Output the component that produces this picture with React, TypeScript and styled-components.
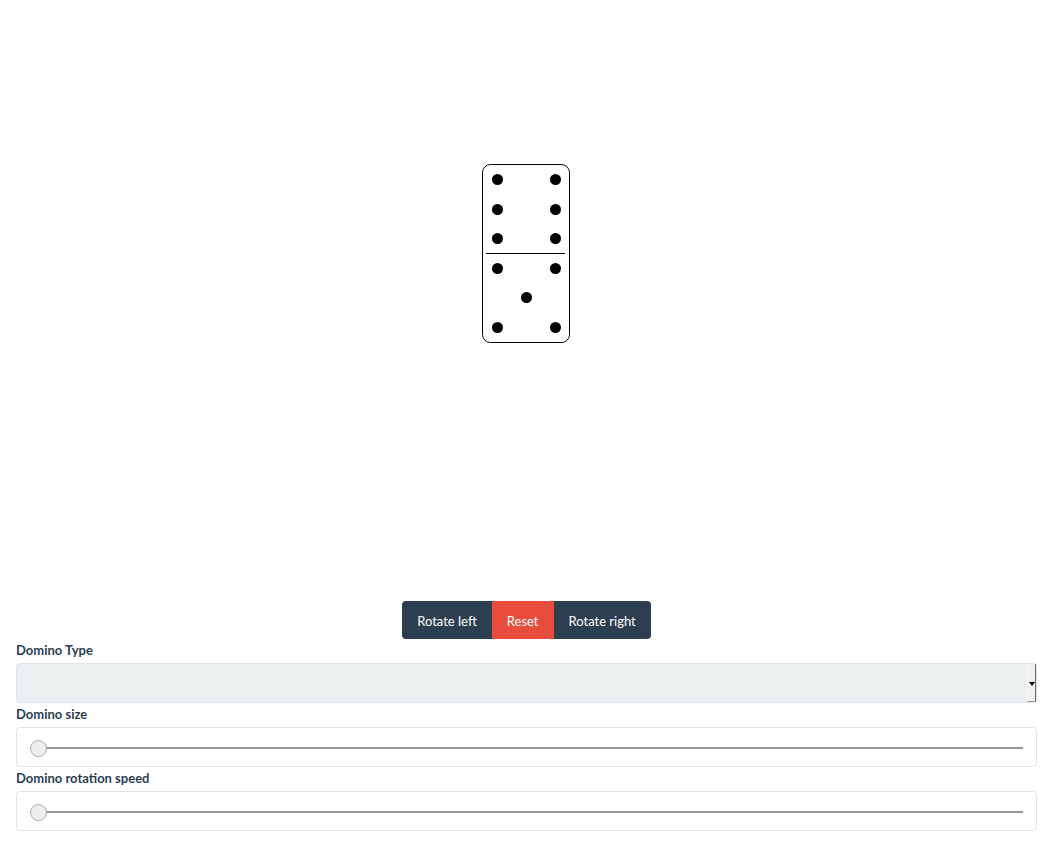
import React, { useState } from 'react';
import styled, { createGlobalStyle } from 'styled-components';

const GlobalStyle = createGlobalStyle`
  html, body {
    margin: 0;
    padding: 0;
    background: #fff;
    font-family: Lato, "Liberation Sans", sans-serif;
    color: #2c3e50;
  }
`;

const Page = styled.div`
  width: 1048px;
  padding: 0 11px 0 16px;
  box-sizing: border-box;
`;

const Stage = styled.div`
  height: 601px;
  display: flex;
  justify-content: center;
  padding-top: 164px;
  box-sizing: border-box;
`;

const ButtonGroup = styled.div`
  display: flex;
  justify-content: center;
`;

const ActionButton = styled.button<{ $variant?: 'danger'; $pos?: 'first' | 'last' }>`
  height: 38px;
  padding: 2px 15px 0;
  border: none;
  margin: 0;
  font-family: Lato, "Liberation Sans", sans-serif;
  font-size: 13px;
  color: #fff;
  background: ${(p) => (p.$variant === 'danger' ? '#e74c3c' : '#2c3e50')};
  border-radius: ${(p) =>
    p.$pos === 'first' ? '4px 0 0 4px' : p.$pos === 'last' ? '0 4px 4px 0' : '0'};
  cursor: pointer;
`;

const Field = styled.div`
  display: flex;
  flex-direction: column;
`;

const Label = styled.label`
  font-size: 13px;
  font-weight: 700;
  line-height: 16px;
  margin: 3px 0 5px;
`;

const SelectWrap = styled.div`
  position: relative;
  height: 40px;
`;

const Select = styled.select`
  appearance: none;
  width: 100%;
  height: 40px;
  box-sizing: border-box;
  background: #ecf0f1;
  border: 1px solid #dce4ec;
  border-radius: 4px;
  font-family: Lato, "Liberation Sans", sans-serif;
  font-size: 15px;
  color: #2c3e50;
`;

const ArrowStrip = styled.span`
  position: absolute;
  right: 1px;
  top: 1px;
  bottom: 1px;
  width: 9px;
  background: #f1f0ee;
  border-left: 1px solid #fafafa;
  border-right: 1px solid #6b6b6b;
  border-bottom: 1px solid #9a9a9a;
  box-sizing: border-box;
  display: flex;
  align-items: center;
  justify-content: center;
  pointer-events: none;

  &::after {
    content: '';
    width: 0;
    height: 0;
    border-left: 3px solid transparent;
    border-right: 3px solid transparent;
    border-top: 4px solid #000;
    margin-top: 2px;
  }
`;

const RangeBox = styled.div`
  height: 40px;
  box-sizing: border-box;
  border: 1px solid #dce4ec;
  border-radius: 4px;
  padding: 2px 13px 0;
  display: flex;
  align-items: center;
`;

const Range = styled.input`
  appearance: none;
  -webkit-appearance: none;
  width: 100%;
  margin: 0;
  height: 18px;
  background: transparent;

  &::-webkit-slider-runnable-track {
    height: 2px;
    background: #999;
  }
  &::-webkit-slider-thumb {
    -webkit-appearance: none;
    width: 17px;
    height: 17px;
    border-radius: 50%;
    background: #eee;
    border: 1px solid #aaa;
    box-sizing: border-box;
    margin-top: -7.5px;
  }
`;

// pip centres inside one half of the tile (88 x 89)
const pips: Record<number, [number, number][]> = {
  5: [
    [15, 15],
    [73, 15],
    [44, 44],
    [15, 74],
    [73, 74],
  ],
  6: [
    [15, 15],
    [73, 15],
    [15, 45],
    [73, 45],
    [15, 74],
    [73, 74],
  ],
};

const Domino: React.FC<{ top: number; bottom: number }> = ({ top, bottom }) => (
  <svg width="89" height="179" viewBox="0 0 89 179">
    <rect x="0.5" y="0.5" width="87" height="178" rx="8" fill="#fff" stroke="#000" strokeWidth="1" />
    <line x1="4" y1="89.5" x2="83" y2="89.5" stroke="#000" strokeWidth="1" />
    {pips[top].map(([x, y], i) => (
      <circle key={'t' + i} cx={x + 0.5} cy={y + 0.5} r="5.5" fill="#000" />
    ))}
    {pips[bottom].map(([x, y], i) => (
      <circle key={'b' + i} cx={x + 0.5} cy={y + 89.5} r="5.5" fill="#000" />
    ))}
  </svg>
);

const App: React.FC = () => {
  const [size, setSize] = useState(0);
  const [speed, setSpeed] = useState(0);

  return (
    <Page>
      <GlobalStyle />
      <Stage>
        <Domino top={6} bottom={5} />
      </Stage>
      <ButtonGroup>
        <ActionButton $pos="first">Rotate left</ActionButton>
        <ActionButton $variant="danger">Reset</ActionButton>
        <ActionButton $pos="last">Rotate right</ActionButton>
      </ButtonGroup>
      <Field>
        <Label>Domino Type</Label>
        <SelectWrap>
          <Select />
          <ArrowStrip />
        </SelectWrap>
      </Field>
      <Field>
        <Label>Domino size</Label>
        <RangeBox>
          <Range type="range" min={0} max={100} value={size} onChange={(e) => setSize(+e.target.value)} />
        </RangeBox>
      </Field>
      <Field>
        <Label>Domino rotation speed</Label>
        <RangeBox>
          <Range type="range" min={0} max={100} value={speed} onChange={(e) => setSpeed(+e.target.value)} />
        </RangeBox>
      </Field>
    </Page>
  );
};

export default App;
